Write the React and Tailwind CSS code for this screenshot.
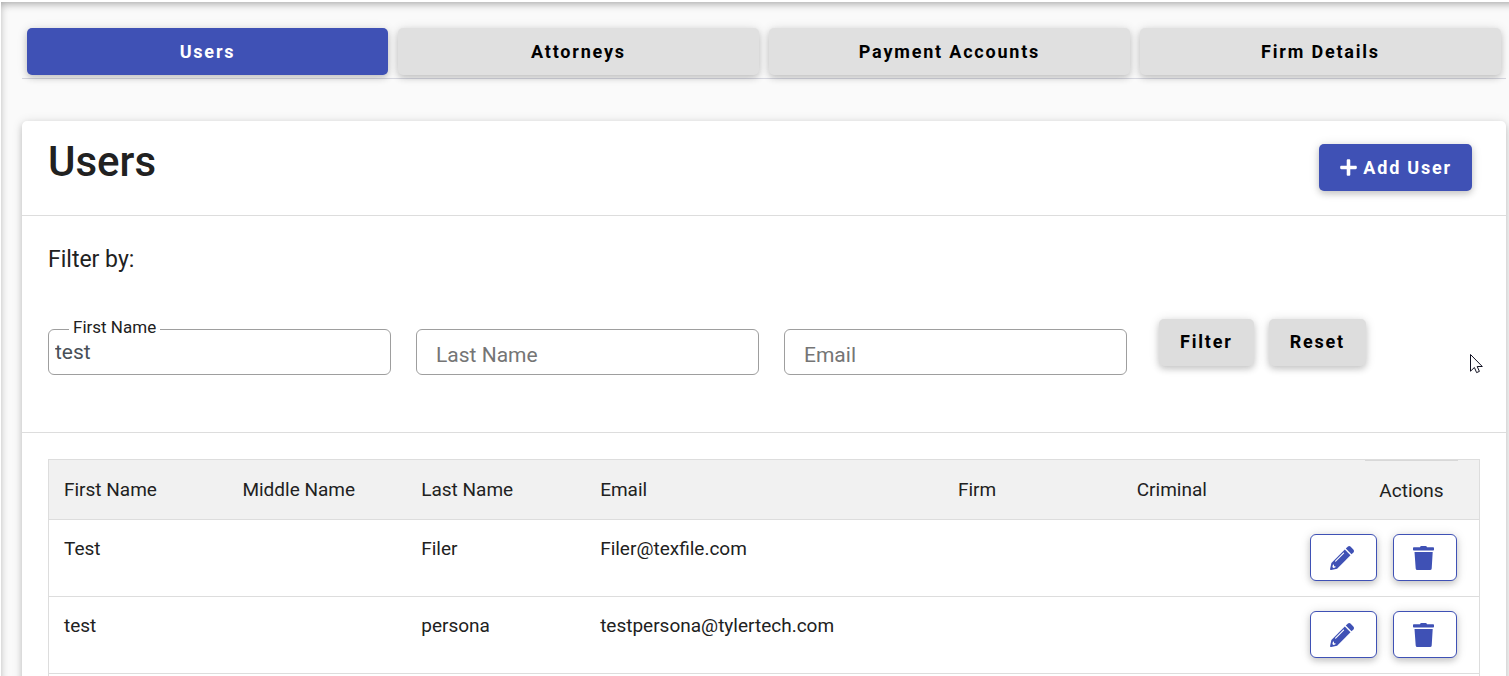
import { useState } from "react";
import { FaPlus } from "react-icons/fa";

const raised = "shadow-[0_3px_6px_0_rgba(0,0,0,0.16),0_1px_11px_0_rgba(0,0,0,0.12)]";

const tabs = ["Users", "Attorneys", "Payment Accounts", "Firm Details"];

const users = [
  { first: "Test", middle: "", last: "Filer", email: "Filer@texfile.com" },
  { first: "test", middle: "", last: "persona", email: "testpersona@tylertech.com" },
];

function Tabs() {
  const [active, setActive] = useState("Users");
  return (
    <nav className="flex gap-[10px] border-b border-[#d6d7e0] px-[5px] pb-[3px]">
      {tabs.map((name) => (
        <button
          key={name}
          type="button"
          onClick={() => setActive(name)}
          className={`h-[47px] flex-1 rounded-[5px] text-lg font-bold tracking-widest ${raised} ${
            active === name ? "bg-[#3f51b5] text-white" : "bg-[#e0e0e0] text-black"
          }`}
        >
          {name}
        </button>
      ))}
    </nav>
  );
}

function Field({ id, label, value, onChange }) {
  const filled = value !== "";
  return (
    <div className="relative min-w-0 flex-1">
      <label
        htmlFor={id}
        className={
          filled
            ? "absolute -top-3 left-[21px] bg-white px-1 text-[17px] leading-5 text-[#212121]"
            : "pointer-events-none absolute top-3 left-5 text-[21px] leading-7 text-[#757575]"
        }
      >
        {label}
      </label>
      <input
        id={id}
        type="text"
        value={value}
        onChange={(e) => onChange(e.target.value)}
        className="block h-[46px] w-full rounded-md border border-[#9e9e9e] bg-transparent px-[6px] text-[21px] text-[#495057] outline-none"
      />
    </div>
  );
}

function Filters() {
  const [first, setFirst] = useState("test");
  const [last, setLast] = useState("");
  const [email, setEmail] = useState("");
  const button = `h-[47px] rounded-[5px] bg-[#dddddd] px-[21px] pb-[2px] text-lg font-bold tracking-widest text-black ${raised}`;
  return (
    <form
      onSubmit={(e) => e.preventDefault()}
      className="border-b border-[#dddddd] px-[26px] pt-7 pb-[57px]"
    >
      <h2 className="text-[23px] leading-8 text-[#212121]">Filter by:</h2>
      <div className="mt-[43px] flex items-start gap-8">
        <div className="mt-[10px] flex min-w-0 flex-1 gap-[25px]">
          <Field id="first-name" label="First Name" value={first} onChange={setFirst} />
          <Field id="last-name" label="Last Name" value={last} onChange={setLast} />
          <Field id="email" label="Email" value={email} onChange={setEmail} />
        </div>
        <div className="flex w-[321px] shrink-0 gap-[15px]">
          <button type="submit" className={button}>
            Filter
          </button>
          <button
            type="button"
            className={button}
            onClick={() => {
              setFirst("");
              setLast("");
              setEmail("");
            }}
          >
            Reset
          </button>
        </div>
      </div>
    </form>
  );
}

function PencilIcon() {
  return (
    <svg viewBox="0 0 24 24" className="size-6" aria-hidden="true">
      <path
        d="M15.8 2.6L17.7 .7Q19.2-.6 20.7 .8L23.3 3.4Q24.7 4.9 23.4 6.4L21.5 8.3Z"
        fill="currentColor"
      />
      <path
        d="M14.8 3.6L20.5 9.3L7.1 22.7L1.2 24Q0 24.2 .1 23L1.4 17Z"
        fill="currentColor"
      />
      <path d="M5.6 15.2L13.6 7.2" fill="none" stroke="#fff" strokeWidth="1.1" strokeLinecap="round" />
      <path d="M2.9 18.8L4 18.6V20.2H5.6L5.3 21.5L3.4 21.9L2.4 20.9Z" fill="#fff" />
    </svg>
  );
}

function TrashIcon() {
  return (
    <svg viewBox="0 0 21 24" className="h-6 w-[21px]" fill="currentColor" aria-hidden="true">
      <path d="M7 1.3Q7.3 0 8.4 0H12.6Q13.7 0 14 1.3H20.2Q21 1.3 21 2.1V3.7Q21 4.5 20.2 4.5H.8Q0 4.5 0 3.7V2.1Q0 1.3 .8 1.3Z" />
      <path d="M1.5 6H19.7L18.7 22.4Q18.6 24 17 24H4.3Q2.8 24 2.7 22.4Z" />
    </svg>
  );
}

function UsersTable() {
  const action = `flex h-[47px] items-center justify-center rounded-md border border-[#3f51b5] bg-white pr-1 text-[#3f51b5] ${raised}`;
  const head = "px-[15px] text-left font-normal";
  const cell = "px-[15px] pt-[15px] align-top";
  return (
    <table className="w-full table-fixed border-collapse border border-[#dddddd] text-[19px] leading-7 text-[#212121]">
      <colgroup>
        <col className="w-1/8" />
        <col className="w-1/8" />
        <col className="w-1/8" />
        <col className="w-1/4" />
        <col className="w-1/8" />
        <col className="w-1/8" />
        <col className="w-1/8" />
      </colgroup>
      <thead>
        <tr className="h-[60px] border-b border-[#dddddd] bg-[#f1f1f1]">
          <th className={head}>First Name</th>
          <th className={head}>Middle Name</th>
          <th className={head}>Last Name</th>
          <th className={head}>Email</th>
          <th className={head}>Firm</th>
          <th className={head}>Criminal</th>
          <th className="p-0 pr-[21px] font-normal">
            <span className="ml-auto block w-[93px] border-t border-[#d8d8d8] pt-4 pb-[14px] text-center">
              Actions
            </span>
          </th>
        </tr>
      </thead>
      <tbody>
        {users.map((u) => (
          <tr key={u.email} className="h-[77px] border-b border-[#dddddd]">
            <td className={cell}>{u.first}</td>
            <td className={cell}>{u.middle}</td>
            <td className={cell}>{u.last}</td>
            <td className={cell}>{u.email}</td>
            <td className={cell} />
            <td className={cell} />
            <td className="pt-[14px] pr-[22px] align-top">
              <div className="flex justify-end gap-4">
                <button type="button" aria-label="Edit user" className={`w-[67px] ${action}`}>
                  <PencilIcon />
                </button>
                <button type="button" aria-label="Delete user" className={`w-16 ${action}`}>
                  <TrashIcon />
                </button>
              </div>
            </td>
          </tr>
        ))}
        <tr className="h-[77px]">
          <td colSpan={7} />
        </tr>
      </tbody>
    </table>
  );
}

function Pointer() {
  return (
    <svg
      viewBox="0 0 13 20"
      className="pointer-events-none absolute top-[354px] right-[26px] h-5 w-[13px]"
      aria-hidden="true"
    >
      <path
        d="M.5 .5V17.2L4.4 13.5L6.6 18.6L9.4 17.4L7.2 12.5H12.3Z"
        fill="#fff"
        stroke="#111122"
        strokeWidth="1"
      />
    </svg>
  );
}

export default function App() {
  return (
    <div className="relative h-screen overflow-hidden bg-white pt-[2px] pl-px font-[Roboto,sans-serif]">
      <div className="-mr-5 min-h-full bg-[#fafafa] pt-[26px] pr-[23px] pl-[21px] shadow-[inset_0_4px_10px_-3px_rgba(0,0,0,0.36),inset_2px_0_10px_0_rgba(0,0,0,0.06)]">
        <Tabs />
        <main className="mt-[42px] rounded-t-[5px] bg-white shadow-[0_3px_6px_0_rgba(0,0,0,0.16),0_1px_11px_0_rgba(0,0,0,0.12)]">
          <header className="flex items-start justify-between border-b border-[#dddddd] pt-[15px] pr-[34px] pb-6 pl-[26px]">
            <h1 className="text-[42px] leading-[52px] font-medium text-[#212121]">Users</h1>
            <button
              type="button"
              className={`mt-2 flex h-[47px] items-center gap-[5px] rounded-[5px] bg-[#3f51b5] px-5 text-lg font-bold tracking-widest text-white ${raised}`}
            >
              <FaPlus className="size-[19px]" />
              Add User
            </button>
          </header>
          <Filters />
          <div className="px-[26px] pt-[26px]">
            <UsersTable />
          </div>
        </main>
      </div>
      <Pointer />
    </div>
  );
}
